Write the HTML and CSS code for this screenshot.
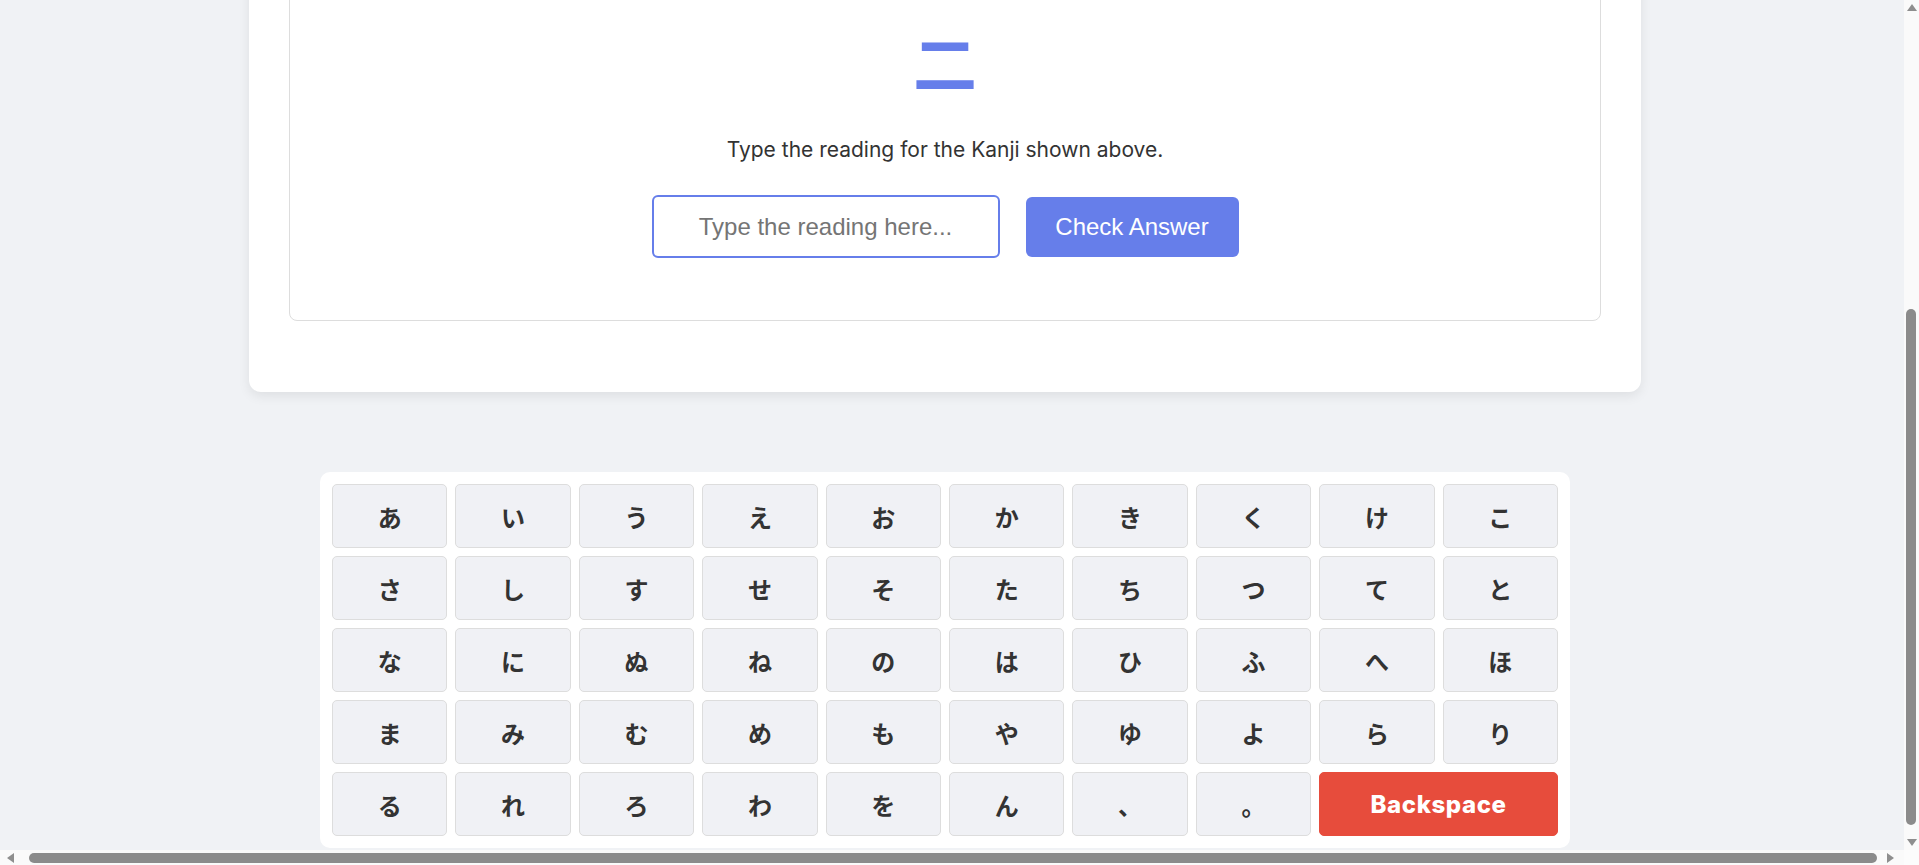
FILE: index.html
```html
<!DOCTYPE html>
<html lang="ja">
<head>
<meta charset="utf-8">
<title>Kanji Reading Quiz</title>
<link rel="stylesheet" href="styles.css">
</head>
<body>
<div class="window">
  <div class="viewport">
    <main class="quiz-card">
      <section class="question-card">
        <div class="kanji">二</div>
        <p class="instruction">Type the reading for the Kanji shown above.</p>
        <div class="answer-row">
          <input class="answer-input" type="text" placeholder="Type the reading here...">
          <button class="check-btn" type="button">Check Answer</button>
        </div>
      </section>
    </main>
    <div class="keyboard">
      <button class="key" type="button">あ</button>
      <button class="key" type="button">い</button>
      <button class="key" type="button">う</button>
      <button class="key" type="button">え</button>
      <button class="key" type="button">お</button>
      <button class="key" type="button">か</button>
      <button class="key" type="button">き</button>
      <button class="key" type="button">く</button>
      <button class="key" type="button">け</button>
      <button class="key" type="button">こ</button>
      <button class="key" type="button">さ</button>
      <button class="key" type="button">し</button>
      <button class="key" type="button">す</button>
      <button class="key" type="button">せ</button>
      <button class="key" type="button">そ</button>
      <button class="key" type="button">た</button>
      <button class="key" type="button">ち</button>
      <button class="key" type="button">つ</button>
      <button class="key" type="button">て</button>
      <button class="key" type="button">と</button>
      <button class="key" type="button">な</button>
      <button class="key" type="button">に</button>
      <button class="key" type="button">ぬ</button>
      <button class="key" type="button">ね</button>
      <button class="key" type="button">の</button>
      <button class="key" type="button">は</button>
      <button class="key" type="button">ひ</button>
      <button class="key" type="button">ふ</button>
      <button class="key" type="button">へ</button>
      <button class="key" type="button">ほ</button>
      <button class="key" type="button">ま</button>
      <button class="key" type="button">み</button>
      <button class="key" type="button">む</button>
      <button class="key" type="button">め</button>
      <button class="key" type="button">も</button>
      <button class="key" type="button">や</button>
      <button class="key" type="button">ゆ</button>
      <button class="key" type="button">よ</button>
      <button class="key" type="button">ら</button>
      <button class="key" type="button">り</button>
      <button class="key" type="button">る</button>
      <button class="key" type="button">れ</button>
      <button class="key" type="button">ろ</button>
      <button class="key" type="button">わ</button>
      <button class="key" type="button">を</button>
      <button class="key" type="button">ん</button>
      <button class="key" type="button">、</button>
      <button class="key" type="button">。</button>
      <button class="key key-backspace" type="button">Backspace</button>
    </div>
  </div>

  <div class="scrollbar scrollbar-v">
    <span class="sb-button sb-button-v">
      <svg class="sb-arrow" width="10" height="7" viewBox="0 0 10 7"><polygon points="5,0 10,7 0,7"/></svg>
    </span>
    <div class="sb-track sb-track-v"><div class="sb-thumb sb-thumb-v"></div></div>
    <span class="sb-button sb-button-v">
      <svg class="sb-arrow" width="10" height="7" viewBox="0 0 10 7"><polygon points="0,0 10,0 5,7"/></svg>
    </span>
  </div>

  <div class="scrollbar scrollbar-h">
    <span class="sb-button sb-button-left">
      <svg class="sb-arrow" width="7" height="10" viewBox="0 0 7 10"><polygon points="0,5 7,0 7,10"/></svg>
    </span>
    <div class="sb-track sb-track-h"><div class="sb-thumb sb-thumb-h"></div></div>
    <span class="sb-button sb-button-right">
      <svg class="sb-arrow" width="7" height="10" viewBox="0 0 7 10"><polygon points="0,0 7,5 0,10"/></svg>
    </span>
  </div>

  <div class="scrollbar-corner"></div>
</div>
</body>
</html>
```

FILE: styles.css
```css
* {
  box-sizing: border-box;
}

html,
body {
  margin: 0;
  padding: 0;
}

body {
  background: #f0f2f5;
  color: #333;
  font-family: "Inter", "Noto Sans CJK JP", sans-serif;
}

/* browser window: page area + scrollbars */
.window {
  display: grid;
  grid-template-columns: 1904px 15px;
  grid-template-rows: 850px 15px;
  width: 1919px;
  height: 865px;
  overflow: hidden;
}

.viewport {
  display: flex;
  flex-direction: column;
  justify-content: flex-end;
  align-items: center;
  overflow: hidden;
  padding: 0 14px 2px 0;
  background: #f0f2f5;
}

/* quiz card */
.quiz-card {
  flex-shrink: 0;
  width: 1392px;
  padding: 40px;
  background: #fff;
  border-radius: 12px;
  box-shadow: 0 4px 12px rgba(0, 0, 0, 0.08);
}

.question-card {
  margin-bottom: 31px;
  padding: 30px 40px 62px;
  border: 1px solid #ddd;
  border-radius: 8px;
  text-align: center;
}

.kanji {
  margin-bottom: 36px;
  font-family: "Noto Sans CJK JP", sans-serif;
  font-size: 64px;
  font-weight: 700;
  line-height: 1.2;
  color: #667eea;
}

.instruction {
  margin: 0 0 30px;
  font-size: 21px;
  line-height: 30px;
  color: #333;
}

.answer-row {
  display: flex;
  justify-content: center;
  align-items: center;
  gap: 26px;
}

.answer-input {
  width: 348px;
  height: 63px;
  padding: 0 15px;
  border: 2px solid #667eea;
  border-radius: 6px;
  font-family: "Liberation Sans", Arial, sans-serif;
  font-size: 24px;
  text-align: center;
  color: #333;
  outline: none;
}

.answer-input::placeholder {
  color: #757575;
}

.check-btn {
  width: 213px;
  height: 60px;
  padding: 0;
  border: none;
  border-radius: 6px;
  background: #667eea;
  color: #fff;
  font-family: "Liberation Sans", Arial, sans-serif;
  font-size: 24px;
}

/* on-screen kana keyboard */
.keyboard {
  flex-shrink: 0;
  display: grid;
  grid-template-columns: repeat(10, 1fr);
  gap: 8px;
  width: 1250px;
  margin-top: 80px;
  padding: 12px;
  background: #fff;
  border-radius: 10px;
}

.key {
  height: 64px;
  padding: 0;
  border: 1px solid #ddd;
  border-radius: 5px;
  background: #f0f1f5;
  color: #333;
  font-family: "Inter", "Noto Sans CJK JP", sans-serif;
  font-size: 24px;
  font-weight: 700;
}

.key-backspace {
  grid-column: span 2;
  border-color: #e74c3c;
  background: #e74c3c;
  color: #fff;
  font-weight: 800;
  letter-spacing: 0.6px;
}

/* scrollbars */
.scrollbar {
  display: flex;
  background: #fafafa;
}

.scrollbar-v {
  flex-direction: column;
}

.sb-button {
  display: flex;
  align-items: center;
  justify-content: center;
  flex-shrink: 0;
}

.sb-button-v {
  height: 15px;
}

.sb-button-left {
  width: 20px;
}

.sb-button-right {
  width: 16px;
  margin-right: 6px;
}

.sb-arrow {
  display: block;
  fill: #8e8e8e;
}

.sb-track {
  flex: 1;
  display: flex;
}

.sb-track-v {
  flex-direction: column;
  justify-content: flex-end;
  padding: 0 3px 10px 2px;
}

.sb-track-h {
  padding: 3px 5px 2px 9px;
}

.sb-thumb {
  background: #8b8b8b;
  border-radius: 5px;
}

.sb-thumb-v {
  height: 516px;
}

.sb-thumb-h {
  flex: 1;
}

.scrollbar-corner {
  background: #fcfcfc;
}
```
